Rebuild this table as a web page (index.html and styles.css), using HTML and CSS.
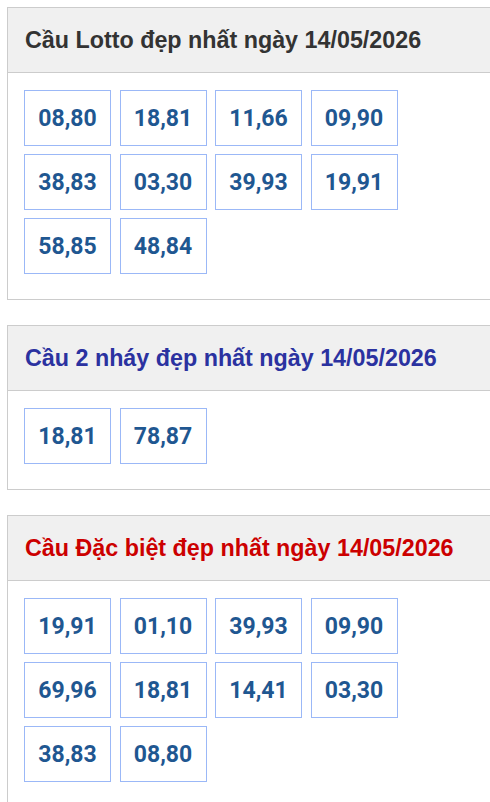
FILE: index.html
```html
<!DOCTYPE html>
<html>
<head>
<meta charset="utf-8">
<meta name="viewport" content="width=device-width, initial-scale=1.0">
<link rel="stylesheet" href="styles.css">
</head>
<body>
  <div class="panel">
    <div class="panel-head"><h2 class="title">Cầu Lotto đẹp nhất ngày 14/05/2026</h2></div>
    <div class="panel-body">
      <span class="num">08,80</span>
      <span class="num">18,81</span>
      <span class="num">11,66</span>
      <span class="num">09,90</span>
      <span class="num">38,83</span>
      <span class="num">03,30</span>
      <span class="num">39,93</span>
      <span class="num">19,91</span>
      <span class="num">58,85</span>
      <span class="num">48,84</span>
    </div>
  </div>

  <div class="panel">
    <div class="panel-head"><h2 class="title title-blue">Cầu 2 nháy đẹp nhất ngày 14/05/2026</h2></div>
    <div class="panel-body">
      <span class="num">18,81</span>
      <span class="num">78,87</span>
    </div>
  </div>

  <div class="panel">
    <div class="panel-head"><h2 class="title title-red">Cầu Đặc biệt đẹp nhất ngày 14/05/2026</h2></div>
    <div class="panel-body">
      <span class="num">19,91</span>
      <span class="num">01,10</span>
      <span class="num">39,93</span>
      <span class="num">09,90</span>
      <span class="num">69,96</span>
      <span class="num">18,81</span>
      <span class="num">14,41</span>
      <span class="num">03,30</span>
      <span class="num">38,83</span>
      <span class="num">08,80</span>
    </div>
  </div>
</body>
</html>
```

FILE: styles.css
```css
* {box-sizing: border-box;}

html, body {
  overflow-x: hidden;
}

body {
  margin: 7px 0 0 7px;
  background: #fff;
  font-family: "Liberation Sans", Arial, sans-serif;
}

.panel {
  border: 1px solid #cccccc;
  margin-right: -30px;
  margin-bottom: 25px;
}

.panel-head {
  background: #f0f0f0;
  border-bottom: 1px solid #cccccc;
  height: 65px;
  display: flex;
  align-items: center;
  padding-left: 17px;
}

.title {
  margin: 0;
  font-size: 23.3px;
  font-weight: bold;
  color: #333333;
}

.title-blue {
  color: #2b32a0;
}

.title-red {
  color: #cc0000;
}

.panel-body {
  padding: 17px 16px 25px 16px;
  display: flex;
  flex-wrap: wrap;
  gap: 8px 8.5px;
  width: 410px;
}

.num {
  width: 87px;
  height: 56px;
  border: 1px solid #9bb8f7;
  display: flex;
  align-items: center;
  justify-content: center;
  font-family: Roboto, "Liberation Sans", sans-serif;
  font-weight: bold;
  font-size: 23px;
  color: #1f5791;
}
```
